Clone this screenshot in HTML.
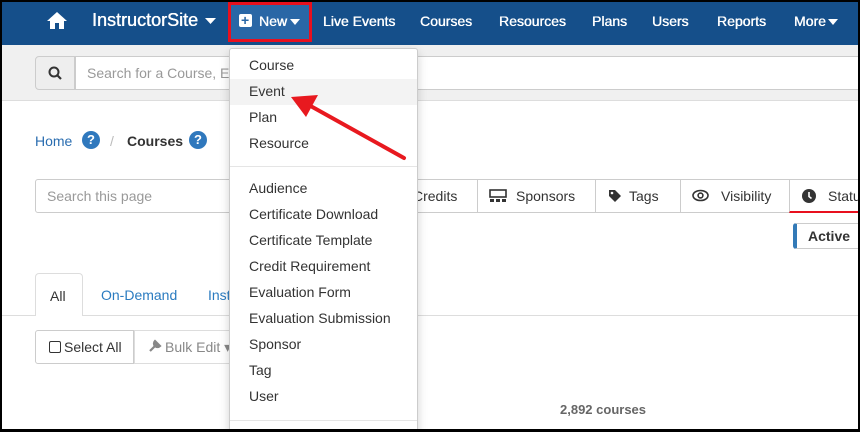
<!DOCTYPE html>
<html><head><meta charset="utf-8"><style>
*{box-sizing:border-box;margin:0;padding:0}
body{width:860px;height:432px;overflow:hidden;background:#000;font-family:"Liberation Sans",Arial,sans-serif;position:relative}
#pg{position:absolute;left:2px;top:2px;width:856px;height:427px;background:#fff;overflow:hidden}
.a{position:absolute;white-space:nowrap}
#nav{left:0;top:0;width:856px;height:43px;background:#154f8a}
.n{color:#fff;font-size:14px;font-weight:normal;top:11px;text-shadow:0 0 0.4px #fff,0.3px 0 0 #fff}
#band{left:0;top:43px;width:856px;height:56px;background:#f0f0f0;border-bottom:1px solid #ddd}
.dd{left:227px;top:46px;width:189px;height:400px;background:#fff;border:1px solid #ccc;border-radius:3px;box-shadow:0 4px 10px rgba(0,0,0,.18)}
.it{left:20px;font-size:14px;color:#333}
.tb{top:177px;height:34px;border:1px solid #ccc;font-size:14px;color:#333;line-height:32px;padding-left:12px}
</style></head><body><div id="pg">
<div class="a" id="nav"></div>
<svg class="a" style="left:44px;top:9px" width="22" height="18" viewBox="0 0 22 18"><path d="M11 1 L1 10 H4 V18 H9 V12 H13 V18 H18 V10 H21 Z" fill="#fff"/></svg>
<div class="a n" style="left:90px;font-size:18px;top:8px">InstructorSite</div>
<svg class="a" style="left:203px;top:16px" width="11" height="6"><path d="M0 0H11L5.5 6Z" fill="#fff"/></svg>
<div class="a" style="left:226px;top:0;width:84px;height:40px;background:#2a67a6;border:3px solid #e8101e"></div>
<div class="a" style="left:237px;top:12px;width:13px;height:13px;background:#fff;border-radius:2px"></div>
<div class="a" style="left:239px;top:10px;color:#2a67a6;font-weight:bold;font-size:14px">+</div>
<div class="a n" style="left:257px">New</div>
<svg class="a" style="left:288px;top:17px" width="10" height="6"><path d="M0 0H10L5 6Z" fill="#fff"/></svg>
<div class="a n" style="left:321px">Live Events</div>
<div class="a n" style="left:418px">Courses</div>
<div class="a n" style="left:497px">Resources</div>
<div class="a n" style="left:590px">Plans</div>
<div class="a n" style="left:650px">Users</div>
<div class="a n" style="left:715px">Reports</div>
<div class="a n" style="left:792px">More</div>
<svg class="a" style="left:826px;top:17px" width="10" height="6"><path d="M0 0H10L5 6Z" fill="#fff"/></svg>
<div class="a" id="band"></div>
<div class="a" style="left:33px;top:54px;width:40px;height:34px;background:#eee;border:1px solid #ccc;border-radius:4px 0 0 4px"></div>
<svg class="a" style="left:46px;top:64px" width="14" height="14"><circle cx="6" cy="6" r="4.5" stroke="#333" stroke-width="2" fill="none"/><path d="M9 9L13 13" stroke="#333" stroke-width="2.2"/></svg>
<div class="a" style="left:73px;top:54px;width:790px;height:34px;background:#fff;border:1px solid #ccc"></div>
<div class="a" style="left:85px;top:63px;color:#999;font-size:14px">Search for a Course, Event</div>
<div class="a" style="left:33px;top:131px;color:#2a6db0;font-size:14px">Home</div>
<div class="a" style="left:80px;top:129px;width:18px;height:18px;border-radius:50%;background:#2f78bd;color:#fff;font-size:13px;font-weight:bold;text-align:center;line-height:18px">?</div>
<div class="a" style="left:108px;top:131px;color:#bbb;font-size:14px">/</div>
<div class="a" style="left:125px;top:131px;color:#333;font-size:14px;font-weight:bold">Courses</div>
<div class="a" style="left:187px;top:129px;width:18px;height:18px;border-radius:50%;background:#2f78bd;color:#fff;font-size:13px;font-weight:bold;text-align:center;line-height:18px">?</div>
<div class="a" style="left:33px;top:177px;width:200px;height:34px;border:1px solid #ccc;border-radius:3px"></div>
<div class="a" style="left:45px;top:186px;color:#999;font-size:14px">Search this page</div>
<div class="a tb" style="left:380px;width:96px;padding-left:30px">Credits</div>
<div class="a tb" style="left:475px;width:119px;padding-left:38px">Sponsors</div>
<svg class="a" style="left:487px;top:187px" width="18" height="14"><rect x="1" y="1" width="16" height="7" fill="none" stroke="#333" stroke-width="1.6"/><rect x="1" y="10" width="4" height="3" fill="#333"/><rect x="7" y="10" width="4" height="3" fill="#333"/><rect x="13" y="10" width="4" height="3" fill="#333"/></svg>
<div class="a tb" style="left:593px;width:86px;padding-left:33px">Tags</div>
<svg class="a" style="left:606px;top:187px" width="14" height="14"><path d="M1 1H7L13 7L7 13L1 7Z" fill="#333"/><circle cx="4" cy="4" r="1.3" fill="#fff"/></svg>
<div class="a tb" style="left:678px;width:110px;padding-left:40px">Visibility</div>
<svg class="a" style="left:690px;top:187px" width="17" height="13"><ellipse cx="8.5" cy="6.5" rx="7.5" ry="5" fill="none" stroke="#333" stroke-width="1.6"/><circle cx="8.5" cy="6.5" r="2.4" fill="none" stroke="#333" stroke-width="1.6"/></svg>
<div class="a tb" style="left:787px;width:80px;padding-left:38px;border-bottom:2px solid #e8101e">Status</div>
<svg class="a" style="left:800px;top:187px" width="14" height="14"><circle cx="7" cy="7" r="7" fill="#333"/><path d="M7 3V7.5L9.5 9.5" stroke="#fff" stroke-width="1.6" fill="none"/></svg>
<div class="a" style="left:791px;top:221px;width:80px;height:26px;border:1px solid #ccc;border-left:4px solid #337ab7;border-radius:3px;font-size:14px;font-weight:bold;color:#333;padding-left:11px;line-height:24px">Active</div>
<div class="a" style="left:0;top:313px;width:856px;height:1px;background:#ddd"></div>
<div class="a" style="left:33px;top:271px;width:48px;height:43px;border:1px solid #ddd;border-bottom:none;border-radius:4px 4px 0 0;background:#fff;color:#333;font-size:14px;padding:14px 0 0 14px">All</div>
<div class="a" style="left:99px;top:285px;color:#2a7bc0;font-size:14px">On-Demand</div>
<div class="a" style="left:206px;top:285px;color:#2a7bc0;font-size:14px">Instructor</div>
<div class="a" style="left:33px;top:328px;width:99px;height:34px;border:1px solid #ccc;border-radius:3px 0 0 3px;font-size:14px;color:#333;padding:8px 0 0 13px"><span style="display:inline-block;width:12px;height:12px;border:1.5px solid #333;border-radius:2px;vertical-align:-1px;margin-right:3px"></span>Select All</div>
<div class="a" style="left:132px;top:328px;width:110px;height:34px;border:1px solid #ddd;font-size:14px;color:#888;padding:8px 0 0 30px">Bulk Edit ▾</div>
<svg class="a" style="left:146px;top:337px" width="14" height="14"><path d="M2 12L8 6M7 2A3 3 0 1 0 12 7L10 5Z" stroke="#888" stroke-width="2.2" fill="#888"/></svg>
<div class="a" style="left:558px;top:400px;color:#666;font-size:13px;font-weight:bold">2,892 courses</div>
<div class="a dd"></div>
<div class="a" style="left:228px;top:77px;width:187px;height:26px;background:#f3f3f3"></div>
<div class="a it" style="left:247px;top:55px">Course</div>
<div class="a it" style="left:247px;top:81px">Event</div>
<div class="a it" style="left:247px;top:107px">Plan</div>
<div class="a it" style="left:247px;top:133px">Resource</div>
<div class="a" style="left:228px;top:164px;width:187px;height:1px;background:#e5e5e5"></div>
<div class="a it" style="left:247px;top:178px">Audience</div>
<div class="a it" style="left:247px;top:204px">Certificate Download</div>
<div class="a it" style="left:247px;top:230px">Certificate Template</div>
<div class="a it" style="left:247px;top:256px">Credit Requirement</div>
<div class="a it" style="left:247px;top:282px">Evaluation Form</div>
<div class="a it" style="left:247px;top:308px">Evaluation Submission</div>
<div class="a it" style="left:247px;top:334px">Sponsor</div>
<div class="a it" style="left:247px;top:360px">Tag</div>
<div class="a it" style="left:247px;top:386px">User</div>
<div class="a" style="left:228px;top:418px;width:187px;height:1px;background:#e5e5e5"></div>
<svg class="a" style="left:0;top:0" width="856" height="427"><path d="M402 156L305 102" stroke="#e8191f" stroke-width="4" stroke-linecap="round"/><path d="M289 95L316 93L304 115Z" fill="#e8191f"/></svg>
</div></body></html>
